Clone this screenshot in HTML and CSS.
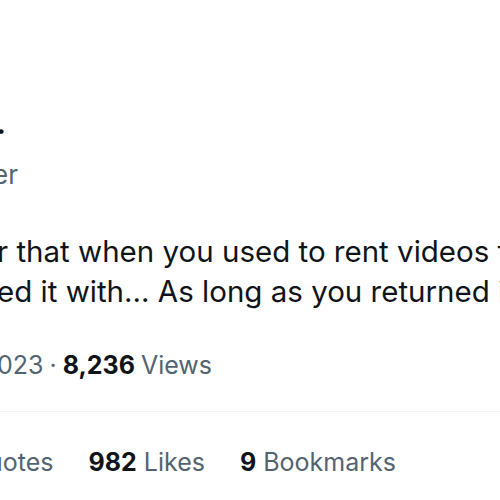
FILE: index.html
```html
<!DOCTYPE html>
<html>
<head>
<meta charset="utf-8">
<link rel="stylesheet" href="styles.css">
</head>
<body>
<article class="tweet">
  <header class="author">
    <div class="name">Blockbuster Fan.</div>
    <div class="handle">@blockbuster</div>
  </header>
  <div class="text">
    <div class="line">r that when you used to rent videos from</div>
    <div class="line">ed it with... As long as you returned it on time</div>
  </div>
  <div class="meta">
    <span class="date">023</span>
    <span class="dot">·</span>
    <strong class="num">8,236</strong>
    <span class="label">Views</span>
  </div>
  <div class="stats">
    <div class="stat"><span class="label">uotes</span></div>
    <div class="stat"><strong class="num">982</strong> <span class="label">Likes</span></div>
    <div class="stat"><strong class="num">9</strong> <span class="label">Bookmarks</span></div>
  </div>
</article>
</body>
</html>
```
FILE: styles.css
```css
html, body {
  margin: 0;
  padding: 0;
  background: #ffffff;
  overflow: hidden;
  width: 500px;
  height: 500px;
}
body {
  font-family: Inter, "Liberation Sans", sans-serif;
  color: #0f1419;
}
.tweet {
  margin-left: -3px;
  white-space: nowrap;
}
.author {
  padding-top: 106px;
  display: flex;
  flex-direction: column;
  align-items: flex-end;
  width: 21px;
}
.name {
  font-size: 29px;
  font-weight: 700;
  line-height: 36px;
  margin-right: 12px;
}
.handle {
  font-size: 26px;
  line-height: 40px;
  margin-top: 13px;
  color: #536471;
}
.text {
  margin-top: 36px;
  font-size: 29.5px;
  line-height: 40px;
}
.meta {
  margin-top: 36px;
  font-size: 25px;
  line-height: 36px;
  color: #536471;
  display: flex;
  gap: 6px;
  padding-bottom: 28px;
  border-bottom: 1px solid #eff3f4;
}
.num {
  color: #0f1419;
  font-weight: 700;
}
.stats {
  display: flex;
  gap: 35px;
  margin-left: -9px;
  font-size: 25px;
  line-height: 36px;
  padding-top: 32px;
}
.label {
  color: #536471;
}
```
